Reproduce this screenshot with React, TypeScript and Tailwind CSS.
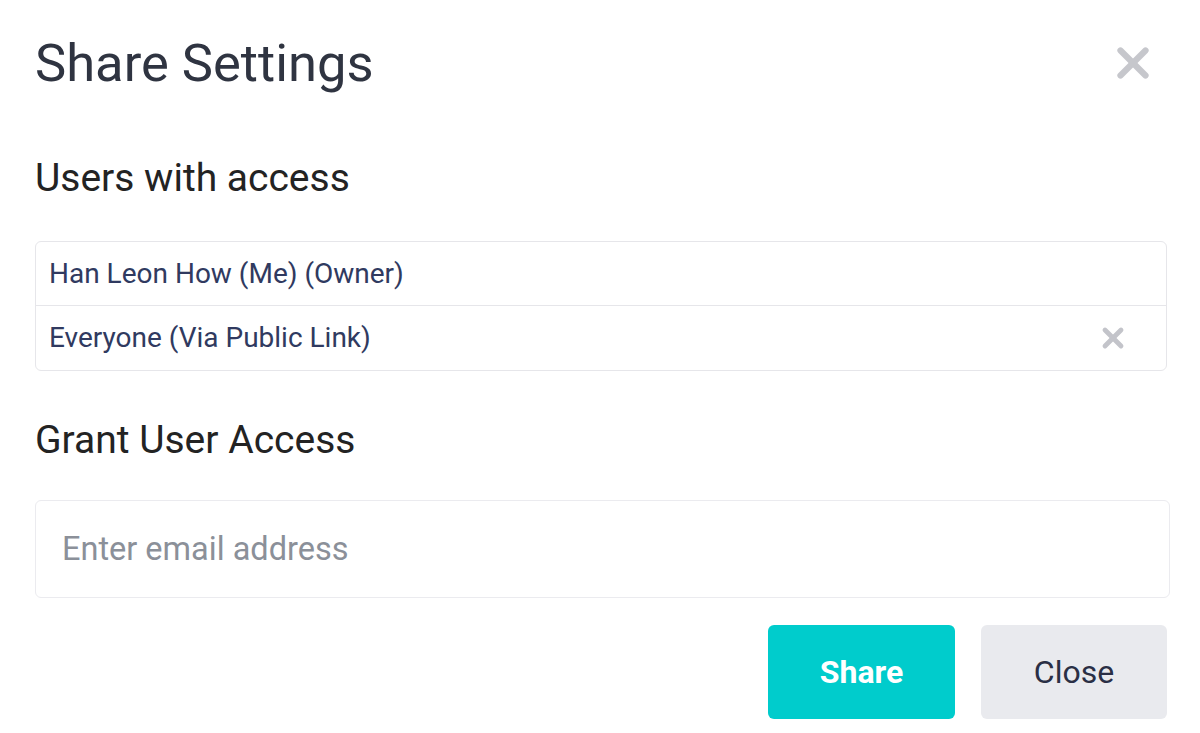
import { X } from 'lucide-react';

export default function App() {
  return (
    <div className="min-h-[733px] w-[1200px] bg-white pl-[35px] pr-[30px] pt-[30px] font-['Roboto',sans-serif]">
      {/* Header */}
      <div className="flex h-[66px] items-center justify-between">
        <h1 className="text-[52.5px] font-normal leading-none text-[#2f3441]">Share Settings</h1>
        <button className="mr-[12px] text-[#c6c7cc]">
          <X className="h-[50px] w-[50px]" strokeWidth={3} />
        </button>
      </div>

      {/* Users with access */}
      <div className="mt-[62px] flex h-[40px] items-center">
        <h2 className="text-[39px] leading-none text-[#232323]">Users with access</h2>
      </div>
      <div className="mt-[43px] mr-[3px] rounded-[6px] border border-[#e6e6ea]">
        <div className="flex h-[64px] items-center border-b border-[#e6e6ea] px-[13px] text-[28px] text-[#303a60]">
          Han Leon How (Me) (Owner)
        </div>
        <div className="flex h-[64px] items-center justify-between px-[13px] text-[28px] text-[#303a60]">
          <span>Everyone (Via Public Link)</span>
          <X className="mr-[24px] h-[32px] w-[32px] text-[#c3c4ca]" strokeWidth={3.6} />
        </div>
      </div>

      {/* Grant access */}
      <div className="mt-[49px] flex h-[40px] items-center">
        <h2 className="text-[39px] leading-none text-[#232323]">Grant User Access</h2>
      </div>
      <input
        className="mt-[40px] block h-[98px] w-full rounded-[6px] border border-[#ebebef] px-[26px] text-[32.5px] text-[#2d3559] outline-none placeholder:text-[#8b9099]"
        placeholder="Enter email address"
      />

      <div className="mt-[27px] mr-[3px] flex justify-end gap-[26px]">
        <button className="h-[94px] w-[187px] rounded-[6px] bg-[#00cccc] text-[32px] font-bold text-white">
          Share
        </button>
        <button className="h-[94px] w-[186px] rounded-[6px] bg-[#e9eaee] text-[32px] font-normal text-[#2a2f45]">
          Close
        </button>
      </div>
    </div>
  );
}
